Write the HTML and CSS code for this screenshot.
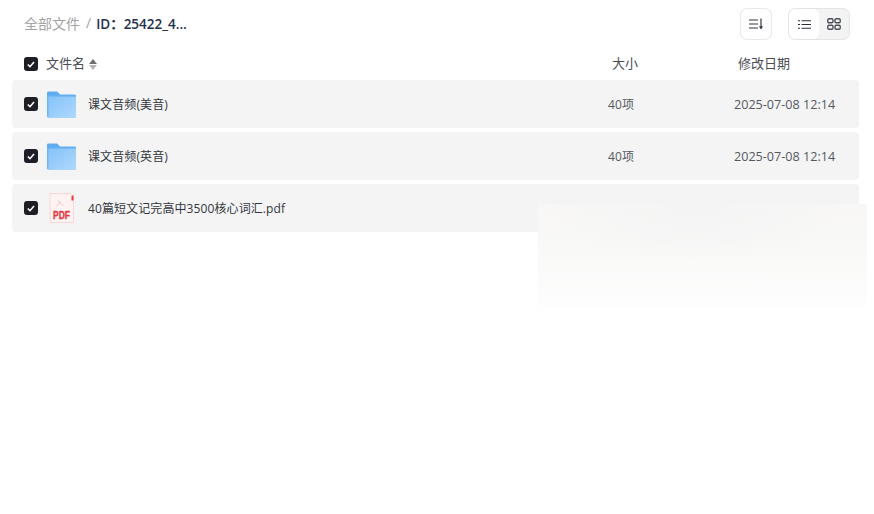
FILE: index.html
```html
<!DOCTYPE html>
<html>
<head>
    <title>全部文件</title>
    <link rel="stylesheet" href="styles.css">
</head>
<body>
    <div class="page">
        <div class="toolbar">
            <div class="crumbs">
                <span class="crumb-root">全部文件</span>
                <span class="crumb-sep">/</span>
                <span class="crumb-current">ID：25422_4...</span>
            </div>
            <div class="tools">
                <button class="tool-btn" type="button">
                    <svg width="14" height="12" viewBox="0 0 14 12" fill="none" stroke="#33373f" stroke-width="1.2">
                        <path d="M0 2h9M0 6h9M0 10h9"/>
                        <path d="M12 0.5v10"/>
                        <path d="M10.4 8.6l1.6 2.4 1.6-2.4z" fill="#33373f" stroke-width="0.5"/>
                    </svg>
                </button>
                <div class="view-switch">
                    <button class="view-btn active" type="button">
                        <svg width="13" height="9" viewBox="0 0 13 9" fill="none" stroke="#2b2f37" stroke-width="1.1">
                            <path d="M0 0.800h2M3.500 0.800h9.500M0 4.500h2M3.500 4.500h9.500M0 8.200h2M3.500 8.200h9.500"/>
                        </svg>
                    </button>
                    <button class="view-btn" type="button">
                        <svg width="14" height="12" viewBox="0 0 14 12" fill="none" stroke="#4a4e57" stroke-width="1.4">
                            <rect x="0.8" y="0.8" width="5.200" height="4" rx="1.200"/>
                            <rect x="8" y="0.8" width="5.200" height="4" rx="1.200"/>
                            <rect x="0.8" y="7.200" width="5.200" height="4" rx="1.200"/>
                            <rect x="8" y="7.200" width="5.200" height="4" rx="1.200"/>
                        </svg>
                    </button>
                </div>
            </div>
        </div>

        <div class="list-head">
            <span class="check"><svg width="8" height="7" viewBox="0 0 8 7" fill="none" stroke="#fff" stroke-width="1.6"><path d="M0.8 3.5l2.2 2.2 4-4.6"/></svg></span>
            <span class="head-name">文件名</span>
            <span class="sort"><i class="sort-up"></i><i class="sort-down"></i></span>
            <span class="head-size">大小</span>
            <span class="head-date">修改日期</span>
        </div>

        <div class="rows">
            <div class="row">
                <span class="check"><svg width="8" height="7" viewBox="0 0 8 7" fill="none" stroke="#fff" stroke-width="1.6"><path d="M0.8 3.5l2.2 2.2 4-4.6"/></svg></span>
                <svg class="file-icon" width="29" height="27" viewBox="0 0 30 28" preserveAspectRatio="none">
                    <defs>
                        <linearGradient id="folderBody" x1="0" y1="0" x2="1" y2="1">
                            <stop offset="0" stop-color="#86c3f8"/>
                            <stop offset="1" stop-color="#aed8fd"/>
                        </linearGradient>
                    </defs>
                    <path d="M0 2a1.500 1.500 0 0 1 1.500-1.500h9l3 3h15a1.500 1.500 0 0 1 1.500 1.500v5H0z" fill="#5fadf0"/>
                    <rect x="0" y="5" width="30" height="22.500" rx="1" fill="#6db6f3"/>
                    <rect x="1.500" y="6" width="28.500" height="21.500" fill="url(#folderBody)"/>
                </svg>
                <span class="file-name">课文音频(美音)</span>
                <span class="file-size">40项</span>
                <span class="file-date">2025-07-08 12:14</span>
            </div>
            <div class="row">
                <span class="check"><svg width="8" height="7" viewBox="0 0 8 7" fill="none" stroke="#fff" stroke-width="1.6"><path d="M0.8 3.5l2.2 2.2 4-4.6"/></svg></span>
                <svg class="file-icon" width="29" height="27" viewBox="0 0 30 28" preserveAspectRatio="none">
                    <path d="M0 2a1.500 1.500 0 0 1 1.500-1.500h9l3 3h15a1.500 1.500 0 0 1 1.500 1.500v5H0z" fill="#5fadf0"/>
                    <rect x="0" y="5" width="30" height="22.500" rx="1" fill="#6db6f3"/>
                    <rect x="1.500" y="6" width="28.500" height="21.500" fill="url(#folderBody)"/>
                </svg>
                <span class="file-name">课文音频(英音)</span>
                <span class="file-size">40项</span>
                <span class="file-date">2025-07-08 12:14</span>
            </div>
            <div class="row">
                <span class="check"><svg width="8" height="7" viewBox="0 0 8 7" fill="none" stroke="#fff" stroke-width="1.6"><path d="M0.8 3.5l2.2 2.2 4-4.6"/></svg></span>
                <svg class="file-icon" width="29" height="30" viewBox="0 0 29 30">
                    <path d="M3 0.500h21l2.500 2.500v26.500H3z" fill="#fdf3f3" stroke="#fbd5d5"/>
                    <rect x="24.500" y="2.500" width="2" height="5" fill="#e8404a"/>
                    <path d="M10.500 7c1.500 2.500 3.500 4.500 6.500 5.500M9 13c2.500-1 4-2.500 5-5" fill="none" stroke="#fac9c9"/>
                    <text class="pdf-mark" x="6" y="26" textLength="17" lengthAdjust="spacingAndGlyphs">PDF</text>
                </svg>
                <span class="file-name">40篇短文记完高中3500核心词汇.pdf</span>
            </div>
        </div>
        <div class="fade"></div>
    </div>
</body>
</html>
```

FILE: styles.css
```css
* {
    box-sizing: border-box;
}
body {
    margin: 0;
    background: #fff;
    font-family: "Open Sans", "Noto Sans CJK SC", sans-serif;
    color: #33363d;
    overflow: hidden;
}
.page {
    position: relative;
    width: 874px;
    height: 514px;
    padding: 8px 15px 0 12px;
}

.toolbar {
    display: flex;
    justify-content: space-between;
    align-items: center;
    height: 32px;
    padding: 0 9px 0 12px;
}
.crumbs {
    display: flex;
    align-items: center;
    font-size: 14px;
    margin-top: -3px;
}
.crumb-root {
    color: #a3a3a3;
}
.crumb-sep {
    color: #a3a3a3;
    margin: 0 5px 0 6px;
}
.crumb-current {
    color: #25304a;
    font-weight: 600;
    font-size: 13.500px;
}
.tools {
    display: flex;
    gap: 16px;
}
.tool-btn {
    display: flex;
    align-items: center;
    justify-content: center;
    width: 32px;
    height: 32px;
    padding: 0;
    border: 1px solid #e8e8e8;
    border-radius: 7px;
    background: #fff;
}
.view-switch {
    display: flex;
    width: 62px;
    height: 32px;
    border: 1px solid #e4e4e4;
    border-radius: 7px;
    background: #f3f3f3;
}
.view-btn {
    display: flex;
    align-items: center;
    justify-content: center;
    flex: 1;
    padding: 0;
    border: 0;
    background: none;
}
.view-btn.active {
    background: #fff;
    border-radius: 6px;
}

.check {
    display: flex;
    align-items: center;
    justify-content: center;
    flex: none;
    width: 14px;
    height: 14px;
    border-radius: 3px;
    background: #1e1f26;
}

.list-head {
    display: flex;
    align-items: center;
    height: 40px;
    padding: 8px 0 0 12px;
    font-size: 13px;
    line-height: 16px;
    color: #4a4d55;
}
.head-name, .head-size, .head-date {
    margin-top: -2px;
}
.head-name {
    margin-left: 8px;
}
.sort {
    display: flex;
    flex-direction: column;
    gap: 1px;
    margin-left: 4px;
}
.sort-up, .sort-down {
    width: 0;
    height: 0;
    border-left: 4px solid transparent;
    border-right: 4px solid transparent;
}
.sort-up {
    border-bottom: 5px solid #6e6e6e;
}
.sort-down {
    border-top: 5px solid #b5b5b5;
}
.head-size {
    margin-left: 515px;
}
.head-date {
    margin-left: 100px;
}

.rows {
    display: flex;
    flex-direction: column;
    gap: 4px;
}
.row {
    display: flex;
    align-items: center;
    height: 48px;
    padding-left: 12px;
    background: #f4f4f4;
    border-radius: 4px;
    font-size: 12px;
}
.file-icon {
    flex: none;
    margin-left: 9px;
}
.file-name {
    margin-left: 12px;
    width: 520px;
    letter-spacing: 0.1px;
}
.file-size {
    width: 126px;
    color: #55585f;
    letter-spacing: 0.2px;
}
.file-date {
    color: #55585f;
    font-size: 12.600px;
}
.pdf-mark {
    font-family: "Liberation Sans", sans-serif;
    font-size: 11px;
    font-weight: 700;
    fill: #e53540;
    stroke: #e53540;
    stroke-width: 0.3;
}

/* blurred patch laid over the third row */
.fade {
    position: absolute;
    left: 538px;
    top: 204px;
    width: 329px;
    height: 108px;
    background:
        radial-gradient(ellipse 45% 45% at 48% 8%, #f4f4f4, rgba(244, 244, 244, 0)),
        linear-gradient(#f8f7f6, #f9f9f8 45%, #fdfdfd 90%, #fff);
}
```
